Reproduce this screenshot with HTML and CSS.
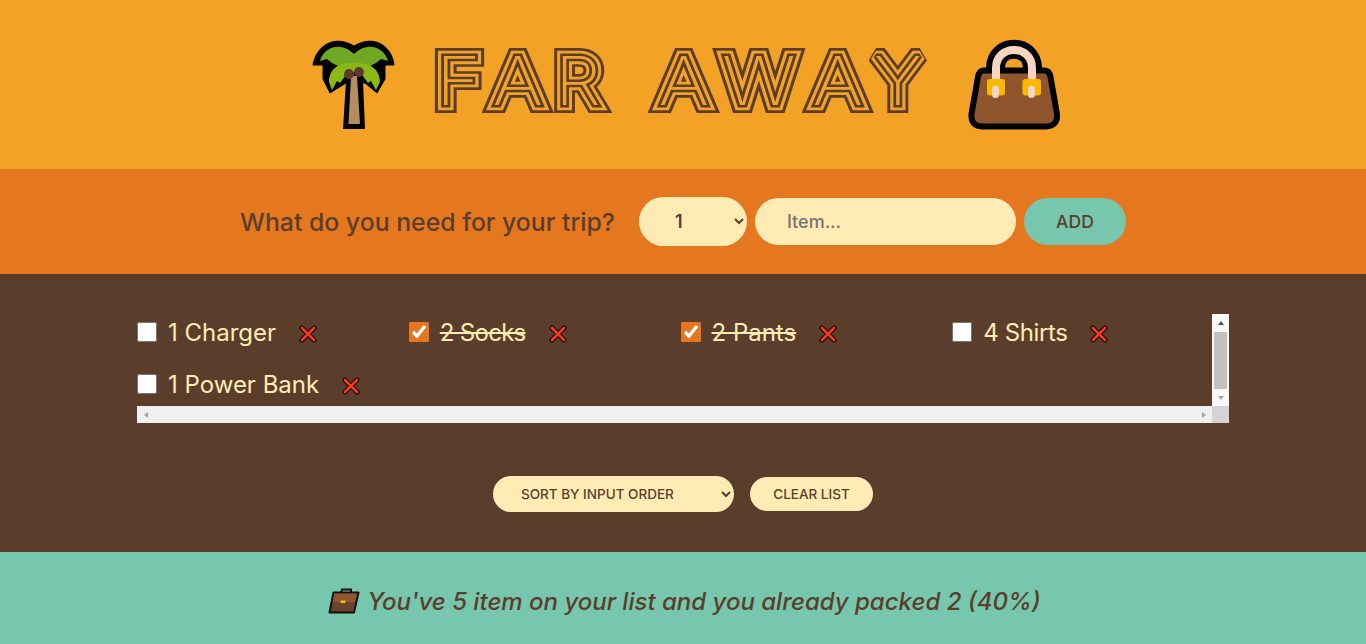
FILE: index.html
```html
<!DOCTYPE html>
<html lang="en">
<head>
<meta charset="utf-8">
<title>Far Away</title>
<link rel="stylesheet" href="styles.css">
</head>
<body>
<svg class="defs" width="0" height="0" aria-hidden="true">
  <symbol id="cross" viewBox="0 0 18 18">
    <path d="M3 3 L15 15 M15 3 L3 15" fill="none" stroke="#1a0d08" stroke-width="5" stroke-linecap="round"/>
    <path d="M3 3 L15 15 M15 3 L3 15" fill="none" stroke="#f8391e" stroke-width="2.6" stroke-linecap="round"/>
  </symbol>
</svg>
<div class="app">
  <header class="logo">
    <svg class="palm" viewBox="0 0 92 97" width="92" height="97">
      <path d="M35 93 H57 L55 45 H38Z" fill="#000"/>
      <path d="M5 29 C8 10 26 -2 46 10 C66 -2 84 10 86 29 H77 V43 L69 57 L57 47 H38 L22 57 L15 43 V29Z" fill="#000" stroke="#000" stroke-width="1" stroke-linejoin="round"/>
      <path d="M40.500 88 H52 L49 40 H43Z" fill="#b58d62"/>
      <path d="M12 25 C15 12 32 4 46 18 C60 4 77 12 80 25 L73 23 L68 27 L62 30 H30 L24 27 L19 23Z" fill="#6fa823"/>
      <path d="M21 46 C21 32 32 26 46 27 C60 26 72 32 72 46 L68 54 L63 45 L60 47 L52 36 H40 L32 47 L29 45 L24 54Z" fill="#8ab915"/>
      <circle cx="41" cy="38" r="5" fill="#5c3b2a"/><circle cx="51" cy="36" r="5" fill="#5c3b2a"/>
    </svg>
    <h1 class="title">
      <svg viewBox="0 0 510 77" width="510" height="77" role="img" aria-label="Far Away">
        <defs>
          <g id="word">
            <text transform="translate(7.900 59) scale(1.14 1)">F</text>
            <text transform="translate(64.400 59) scale(1.15 1)">A</text>
            <text transform="translate(127.200 59) scale(1.09 1)">R</text>
            <text transform="translate(230.400 59) scale(1.15 1)">A</text>
            <text transform="translate(294 59) scale(1.16 1)">W</text>
            <text transform="translate(384.400 59) scale(1.15 1)">A</text>
            <text transform="translate(445.700 59) scale(1.1 1)">Y</text>
          </g>
        </defs>
        <use class="t1" href="#word"/>
        <use class="t2" href="#word"/>
        <use class="t3" href="#word"/>
        <use class="t4" href="#word"/>
      </svg>
    </h1>
    <svg class="bag" viewBox="0 0 100 97" width="100" height="97">
      <path d="M31.500 45 V32 C31.500 7 68.500 7 68.500 32 V45" fill="none" stroke="#000" stroke-width="19"/>
      <path d="M20 34.500 H80 Q85.500 34.500 86.500 41 L93 78 Q94 90 82 90.500 H18 Q6.500 90 7.500 78 L14 41 Q15 34.500 20 34.500Z" fill="#8f552c" stroke="#000" stroke-width="6"/>
      <path d="M32 50 V32 C32 8 68 8 68 32 V50" fill="none" stroke="#f7d5c2" stroke-width="8"/>
      <rect x="23" y="43" width="18" height="16.500" rx="3" fill="#fbb800"/>
      <rect x="58.500" y="43" width="18.500" height="16.500" rx="3" fill="#fbb800"/>
      <path d="M31.500 53 V58.500 M67.500 53 V58.500" fill="none" stroke="#f7d5c2" stroke-width="7" stroke-linecap="round"/>
    </svg>
  </header>
  <form class="add-form">
    <h3>What do you need for your trip?</h3>
    <select class="qty"><option>1</option></select>
    <input class="item-input" type="text" placeholder="Item...">
    <button class="btn-add" type="button">ADD</button>
  </form>
  <main class="list">
    <div class="list-box">
      <ul class="items">
        <li><input type="checkbox"><span>1 Charger</span><button type="button" class="x" aria-label="Remove"><svg width="18" height="18"><use href="#cross"/></svg></button></li>
        <li><input type="checkbox" checked><span class="done tight">2 Socks</span><button type="button" class="x" aria-label="Remove"><svg width="18" height="18"><use href="#cross"/></svg></button></li>
        <li><input type="checkbox" checked><span class="done">2 Pants</span><button type="button" class="x" aria-label="Remove"><svg width="18" height="18"><use href="#cross"/></svg></button></li>
        <li><input type="checkbox"><span class="snug">4 Shirts</span><button type="button" class="x" aria-label="Remove"><svg width="18" height="18"><use href="#cross"/></svg></button></li>
        <li><input type="checkbox"><span>1 Power Bank</span><button type="button" class="x" aria-label="Remove"><svg width="18" height="18"><use href="#cross"/></svg></button></li>
      </ul>
      <div class="vbar" aria-hidden="true">
        <div class="sb-btn sb-top"><i class="arrow-up"></i></div>
        <div class="thumb"></div>
        <div class="sb-btn sb-bottom"><i class="arrow-down"></i></div>
      </div>
      <div class="hbar" aria-hidden="true">
        <div class="sb-btn-h"><i class="arrow-left"></i></div>
        <div class="sb-btn-h"><i class="arrow-right"></i></div>
      </div>
      <div class="corner" aria-hidden="true"></div>
    </div>
    <div class="actions">
      <select class="sort"><option>SORT BY INPUT ORDER</option></select>
      <button class="btn-clear" type="button">CLEAR LIST</button>
    </div>
  </main>
  <footer class="stats">
    <svg class="case" viewBox="0 0 32 26" width="32" height="26" aria-hidden="true">
      <path d="M13 5 L14 1.500 H23 L23 5" fill="none" stroke="#111" stroke-width="2"/>
      <path d="M5.500 4.500 H30.500 L26 24.500 H1.500Z" fill="#6b4130" stroke="#111" stroke-width="2" stroke-linejoin="round"/>
      <path d="M6.300 5.500 H29.300 L27 14 H4.500Z" fill="#8f552c"/>
      <rect x="12.500" y="12.500" width="5" height="2.500" fill="#fbb800"/>
    </svg>
    <em>You've 5 item on your list and you already packed 2 (40%)</em>
  </footer>
</div>
</body>
</html>
```
FILE: styles.css
```css
* { margin: 0; padding: 0; box-sizing: border-box; }
html, body { height: 100%; }
body { font-family: Inter, "Noto Sans", sans-serif; color: #5a3e2b; font-weight: 500; }
.defs { position: absolute; }
.app { height: 644px; display: grid; grid-template-rows: 169px 105px 278px 92px; }
.logo { background: #f4a226; display: flex; align-items: center; justify-content: center; padding-left: 6px; }
.title { display: block; line-height: 0; margin: 0 26px 0 28px; }
.title svg, .palm, .bag { display: block; }
#word text { font-family: Inter, "Liberation Sans", sans-serif; font-size: 67px; font-weight: 200; stroke-linejoin: miter; stroke-miterlimit: 2; }
.t1 { fill: #5a3e2b; stroke: #5a3e2b; stroke-width: 16px; }
.t2 { fill: #f4a226; stroke: #f4a226; stroke-width: 10.600px; }
.t3 { fill: #5a3e2b; stroke: #5a3e2b; stroke-width: 5px; }
.t4 { fill: #f4a226; stroke: none; }
.add-form { background: #e5771f; display: flex; align-items: center; justify-content: center; gap: 8px; }
.add-form h3 { font-size: 24.800px; font-weight: 550; margin-right: 16px; }
.qty, .item-input, .btn-add { border: 0; background: #ffebb3; color: #5a3e2b; font-family: inherit; font-size: 18px; font-weight: 600; }
.qty { width: 108px; height: 49px; border-radius: 25px; padding-left: 32px; }
.item-input { width: 261px; height: 47px; border-radius: 24px; padding-left: 32px; font-weight: 500; }
.btn-add { width: 102px; height: 47px; border-radius: 24px; background: #76c7ad; font-weight: 500; font-size: 17.500px; }
.list { background: #5a3e2b; padding-top: 40px; display: flex; flex-direction: column; align-items: center; }
.list-box { position: relative; width: 1092px; height: 109px; overflow: hidden; }
.items { height: 92px; padding-right: 17px; list-style: none; display: grid; grid-template-columns: repeat(4, 1fr); grid-auto-rows: 36px; column-gap: 12px; row-gap: 16px; }
.vbar { position: absolute; top: 0; right: 0; width: 17px; height: 92px; background: #f8f8f8; display: flex; flex-direction: column; }
.sb-btn { height: 18px; display: flex; align-items: center; justify-content: center; }
.sb-bottom { height: 17px; }
.thumb { flex: 1; margin: 0 2px; background: #c1c1c1; }
.hbar { position: absolute; left: 0; right: 17px; bottom: 0; height: 17px; background: #f0f0f0; display: flex; justify-content: space-between; }
.sb-btn-h { width: 17px; display: flex; align-items: center; justify-content: center; }
.corner { position: absolute; right: 0; bottom: 0; width: 17px; height: 17px; background: #d4d4d4; }
.arrow-up, .arrow-down, .arrow-left, .arrow-right { display: block; width: 0; height: 0; border-style: solid; border-color: transparent; }
.arrow-up { border-width: 0 3.500px 4px; border-bottom-color: #505050; }
.arrow-down { border-width: 4px 3.500px 0; border-top-color: #a3a3a3; }
.arrow-left { border-width: 3.500px 4px 3.500px 0; border-right-color: #a3a3a3; }
.arrow-right { border-width: 3.500px 0 3.500px 4px; border-left-color: #a3a3a3; }
.items li { display: flex; align-items: center; gap: 11px; color: #ffebb3; font-size: 24px; font-weight: 400; }
.items input { width: 20px; height: 20px; accent-color: #e5771f; flex: none; }
.done { text-decoration: line-through; }
.tight { letter-spacing: -0.700px; }
.snug { letter-spacing: -0.400px; }
.x { background: none; border: 0; margin-left: 12px; margin-top: 3px; display: block; line-height: 0; }
.x svg { display: block; }
.actions { margin-top: 53px; display: flex; align-items: center; gap: 16px; }
.sort, .btn-clear { border: 0; background: #ffebb3; color: #5a3e2b; font-family: inherit; font-size: 13.500px; font-weight: 500; }
.sort { width: 241px; height: 36px; border-radius: 18px; padding-left: 24px; }
.btn-clear { width: 123px; height: 34px; border-radius: 17px; }
.stats { background: #76c7ad; display: flex; align-items: center; justify-content: center; gap: 7px; padding: 6px 0 0 3px; font-size: 24px; font-weight: 500; }
.case { display: block; }
```
